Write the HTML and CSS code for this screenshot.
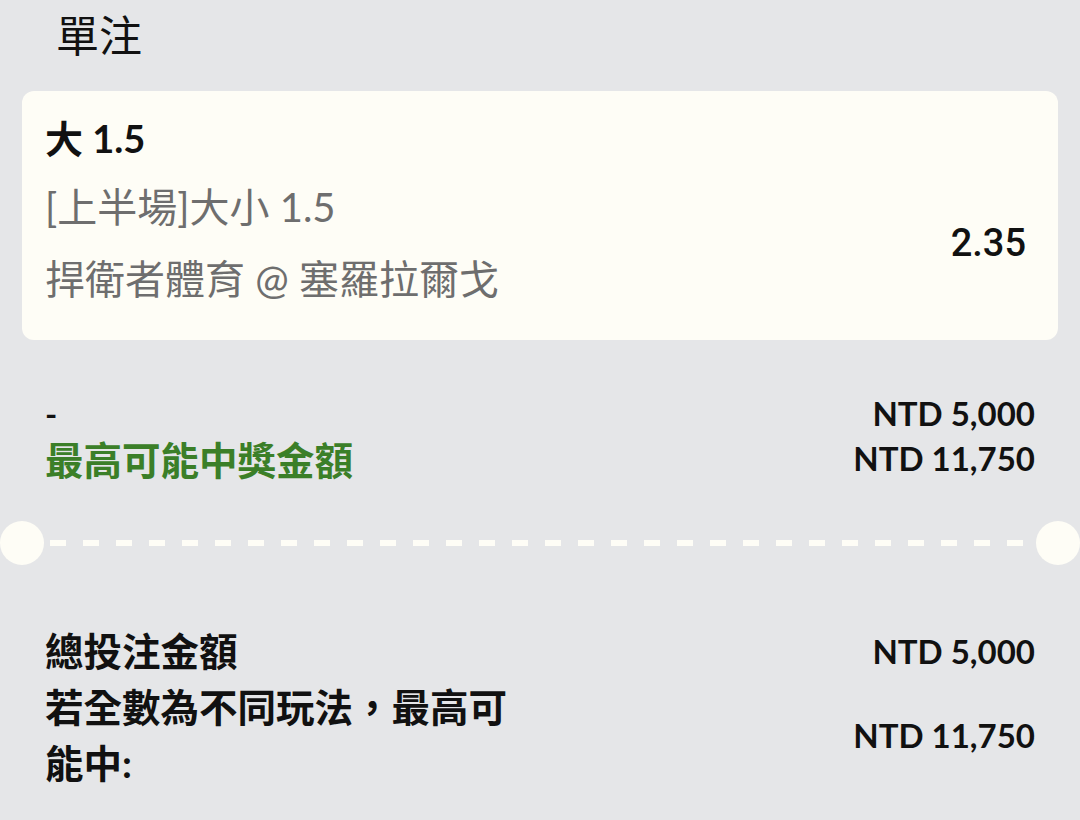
FILE: index.html
```html
<!DOCTYPE html>
<html lang="zh-Hant">
<head>
  <meta charset="UTF-8">
  <meta name="viewport" content="width=device-width, initial-scale=1.0">
  <title>單注</title>
  <link rel="stylesheet" href="styles.css">
</head>
<body>

<div class="slip">
  <h2 class="title">單注</h2>

  <div class="bet-card">
    <div class="selection">大 1.5</div>
    <div class="bet-row">
      <div class="bet-info">
        <div class="market">[上半場]大小 1.5</div>
        <div class="match">捍衛者體育 @ 塞羅拉爾戈</div>
      </div>
      <div class="odds">2.35</div>
    </div>
  </div>

  <div class="summary">
    <div class="summary-row">
      <span class="stake-label">-</span>
      <span class="amount">NTD 5,000</span>
    </div>
    <div class="summary-row">
      <span class="win-label">最高可能中獎金額</span>
      <span class="amount">NTD 11,750</span>
    </div>
  </div>

  <div class="divider">
    <span class="notch"></span>
    <span class="dashes"></span>
    <span class="notch"></span>
  </div>

  <div class="totals">
    <div class="total-row">
      <span class="total-label">總投注金額</span>
      <span class="amount">NTD 5,000</span>
    </div>
    <div class="total-row">
      <span class="total-label wrap">若全數為不同玩法，最高可能中:</span>
      <span class="amount">NTD 11,750</span>
    </div>
  </div>
</div>

</body>
</html>
```

FILE: styles.css
```css
body {
  margin: 0;
  background-color: #e5e6e8;
  font-family: Lato, "Noto Sans CJK TC", sans-serif;
  color: #111;
}
.slip {
  width: 1080px;
}
.title {
  margin: 0;
  padding: 9px 0 0 56px;
  height: 82px;
  font-size: 43px;
  font-weight: 400;
  line-height: 54px;
}
.bet-card {
  margin: 0 22px;
  height: 249px;
  box-sizing: border-box;
  padding: 21px 32px 0 23px;
  background-color: #fefdf6;
  border-radius: 12px;
}
.selection {
  font-size: 38px;
  font-weight: 700;
  line-height: 52px;
}
.bet-row {
  display: flex;
  justify-content: space-between;
  align-items: center;
  margin-top: 7px;
}
.market, .match {
  font-size: 40px;
  color: #6e6e6e;
  line-height: 72px;
}
.odds {
  font-family: Roboto, sans-serif;
  font-weight: 500;
  font-size: 38px;
}
.summary {
  padding: 50px 45px 0 45px;
  height: 180px;
  box-sizing: border-box;
}
.summary-row, .total-row {
  display: flex;
  justify-content: space-between;
  align-items: center;
}
.summary-row {
  height: 45px;
}
.stake-label {
  font-size: 33px;
  font-weight: 700;
}
.win-label {
  font-size: 38.5px;
  font-weight: 700;
  color: #3b7f28;
}
.amount {
  font-size: 33px;
  font-weight: 700;
}
.divider {
  display: flex;
  align-items: center;
  height: 46px;
}
.notch {
  width: 44px;
  height: 44px;
  border-radius: 50%;
  background-color: #fefdf6;
  flex-shrink: 0;
}
.dashes {
  flex: 1;
  height: 6px;
  margin: 0 6px;
  background-image: linear-gradient(to right, #fefdf6 16px, transparent 16px);
  background-size: 33px 6px;
}
.totals {
  padding: 57px 45px 0 45px;
}
.total-row {
  min-height: 56px;
}
.total-label {
  font-size: 38.5px;
  font-weight: 700;
  line-height: 56px;
}
.total-label.wrap {
  max-width: 475px;
}
```
